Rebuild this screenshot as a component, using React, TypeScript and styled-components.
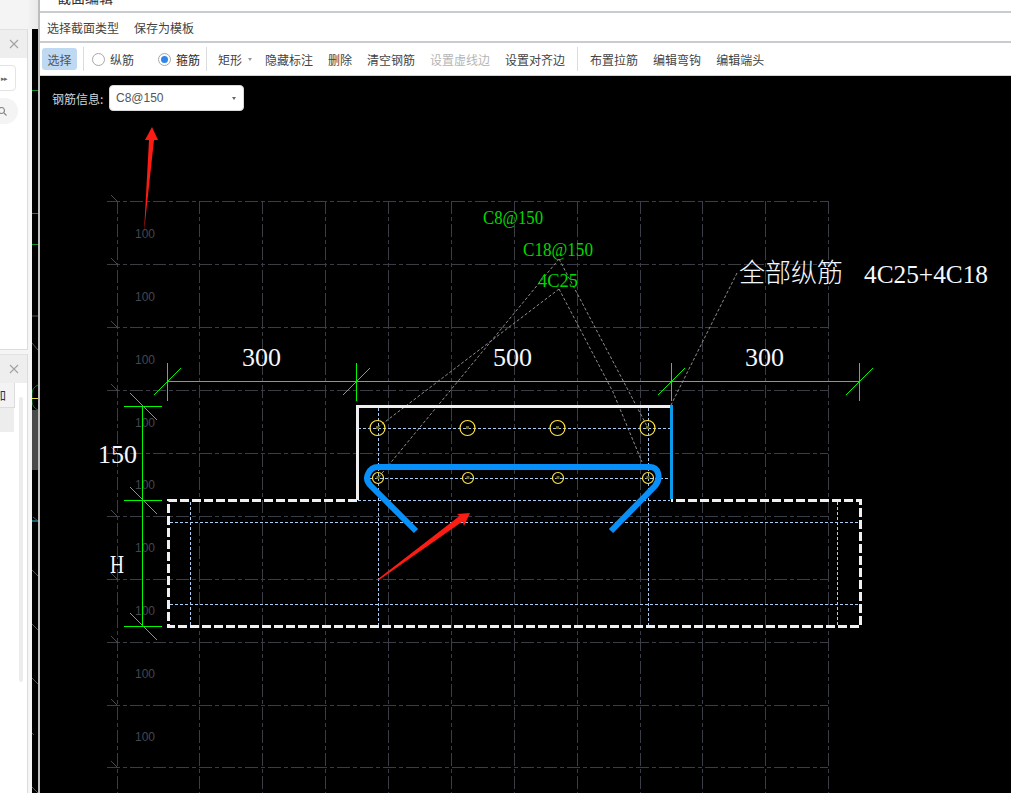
import React from "react";
import styled, { createGlobalStyle } from "styled-components";

const Global = createGlobalStyle`
  html, body { margin: 0; padding: 0; height: 100%; background: #f4f4f4; }
  #root { height: 100%; }
  * { box-sizing: border-box; }
`;

const UI_FONT = `"Noto Sans CJK SC", "Liberation Sans", sans-serif`;

const Page = styled.div`
  display: flex;
  width: 1011px;
  height: 793px;
  overflow: hidden;
  font-family: ${UI_FONT};
`;

const Sidebar = styled.aside`
  flex: none;
  width: 40px;
  height: 100%;
  display: flex;
  padding-top: 29px;
  border-right: 2px solid #bdbdbd;
  background: linear-gradient(90deg, #f4f4f4 0, #f4f4f4 70%, #e9e9e9 100%);
`;

const PanelStack = styled.div`
  flex: none;
  width: 32px;
  display: flex;
  flex-direction: column;
  gap: 4px;
  padding-right: 4px;
  background: #f5f5f5;
`;

const Panel = styled.section<{ $grow?: boolean }>`
  position: relative;
  flex: ${(p) => (p.$grow ? "1" : "none")};
  height: ${(p) => (p.$grow ? "auto" : "321px")};
  background: #fff;
  border-right: 1px solid #dcdcdc;
  border-bottom: ${(p) => (p.$grow ? "none" : "1px solid #dcdcdc")};
  overflow: hidden;
`;

const PanelHeader = styled.div`
  height: 29px;
  background: #eeeeee;
  border-top: 1px solid #e2e2e2;
  display: flex;
  align-items: center;
  padding-left: 9px;
  color: #a2a2a2;
`;

const StepButton = styled.div`
  width: 26px;
  height: 26px;
  margin: 7px 0 0 -10px;
  border: 1px solid #e4e4e4;
  border-radius: 4px;
  background: #fff;
  display: flex;
  align-items: center;
  justify-content: flex-end;
  padding-right: 8px;
  font-size: 7px;
  letter-spacing: -1px;
  color: #666;
`;

const SearchPill = styled.div`
  width: 38px;
  height: 26px;
  margin: 7px 0 0 -20px;
  border-radius: 13px;
  background: #f4f4f4;
  display: flex;
  align-items: center;
  justify-content: flex-end;
  padding-right: 11px;
  color: #8a8a8a;
`;

const ClippedTab = styled.div`
  width: 15px;
  height: 25px;
  background: #f3f3f3;
  border-right: 1px solid #dcdcdc;
  border-bottom: 1px solid #dcdcdc;
  overflow: hidden;
  font-size: 12px;
  line-height: 24px;
  color: #333;
  text-indent: -6px;
  white-space: nowrap;
`;

const GreyBlock = styled.div`
  width: 14px;
  height: 24px;
  background: #ededed;
`;

const ScrollTrack = styled.div`
  position: absolute;
  left: 19px;
  top: 43px;
  width: 4px;
  height: 285px;
  border-radius: 2px;
  background: #ececec;
`;

const Sliver = styled.svg`
  flex: none;
  width: 6px;
  height: 764px;
  display: block;
  background: #000;
`;

const Main = styled.main`
  flex: 1;
  min-width: 0;
  display: flex;
  flex-direction: column;
  background: #fff;
`;

const TitleBar = styled.div`
  flex: none;
  height: 13px;
  border-bottom: 2px solid #c8ccd0;
  overflow: hidden;
  padding-left: 17px;
  display: flex;
  align-items: flex-end;
  font-size: 14px;
  color: #333;
`;

const TitleText = styled.span`
  line-height: 20px;
  margin-bottom: 4px;
`;

const MenuBar = styled.div`
  flex: none;
  height: 30px;
  border-bottom: 2px solid #c8ccd0;
  padding-left: 7px;
  display: flex;
  align-items: center;
  gap: 15px;
  font-size: 12px;
  color: #444;
`;

const ToolBar = styled.div`
  flex: none;
  height: 33px;
  border-bottom: 1px solid #d4d4d4;
  padding-left: 2px;
  display: flex;
  align-items: center;
  font-size: 12px;
  color: #444;
  white-space: nowrap;
`;

const SelectButton = styled.div`
  width: 35px;
  height: 22px;
  border-radius: 3px;
  background: #bfd9f3;
  color: #555;
  display: flex;
  align-items: center;
  justify-content: center;
`;

const Divider = styled.span<{ $left: number; $right: number }>`
  flex: none;
  width: 1px;
  height: 24px;
  background: #dcdcdc;
  margin: 0 ${(p) => p.$right}px 0 ${(p) => p.$left}px;
`;

const RadioItem = styled.label<{ $width: number; $on?: boolean }>`
  flex: none;
  width: ${(p) => p.$width}px;
  display: flex;
  align-items: center;
  gap: 5px;
  color: ${(p) => (p.$on ? "#2a2a2a" : "#444")};
`;

const RadioMark = styled.span<{ $on?: boolean }>`
  flex: none;
  width: 13px;
  height: 13px;
  border-radius: 50%;
  border: 1px solid #a8a8a8;
  background: #fff;
  display: flex;
  align-items: center;
  justify-content: center;
  &::after {
    content: "";
    display: ${(p) => (p.$on ? "block" : "none")};
    width: 7px;
    height: 7px;
    border-radius: 50%;
    background: #2f86e8;
  }
`;

const ToolItem = styled.span<{ $disabled?: boolean; $gap?: number }>`
  flex: none;
  margin-right: ${(p) => p.$gap ?? 15}px;
  color: ${(p) => (p.$disabled ? "#b5b5b5" : "#444")};
`;

const Caret = styled.span`
  flex: none;
  width: 0;
  height: 0;
  margin: 1px 13px 0 -9px;
  border-left: 2.5px solid transparent;
  border-right: 2.5px solid transparent;
  border-top: 3px solid #999;
`;

const Canvas = styled.div`
  position: relative;
  flex: 1;
  min-height: 0;
  background: #000;
  overflow: hidden;
`;

const Drawing = styled.svg`
  display: block;
  width: 971px;
  height: 717px;
`;

const InfoField = styled.div`
  position: absolute;
  left: 12px;
  top: 9px;
  display: flex;
  align-items: center;
  gap: 5px;
  font-size: 12px;
  color: #cfd6dc;
`;

const FieldLabel = styled.span`
  width: 52px;
  white-space: nowrap;
`;

const FakeSelect = styled.div`
  width: 135px;
  height: 26px;
  border-radius: 4px;
  background: #fff;
  border: 1px solid #d9d9d9;
  padding: 0 7px 0 6px;
  display: flex;
  align-items: center;
  justify-content: space-between;
  font-family: "Liberation Sans", sans-serif;
  font-size: 12px;
  color: #555;
`;

const SelectCaret = styled.span`
  width: 0;
  height: 0;
  border-left: 2.5px solid transparent;
  border-right: 2.5px solid transparent;
  border-top: 3px solid #666;
`;

const GRID = "#3a3d46";
const GREEN = "#00f800";
const DASH = "#a9cdf5";
const BLUE = "#0890fa";

const gridX = [117, 199, 262, 325, 388, 451, 514, 577, 640, 702, 765, 828];
const gridY = [201, 264, 327, 390, 453, 516, 579, 642, 705, 767];
const labelY = [238, 301, 364, 427, 489, 552, 615, 678, 741];
const rebarX = [378, 468, 558, 648];

const leaders = [
  "737,273 671,405",
  "559,259 378,478",
  "559,289 377,428",
  "559,259 648,428",
  "559,289 613,392 642,462",
];

const dimTicksH = [167, 356, 671, 859];
const dimTicksV = [406, 500, 626];

const serif = `"Liberation Serif", "Noto Sans CJK SC", serif`;

const DimText: React.FC<{
  x: number;
  y: number;
  children: React.ReactNode;
  len?: number;
  size?: number;
  light?: boolean;
}> = ({ x, y, children, len, size = 26, light }) => (
  <text
    x={x}
    y={y}
    fontFamily={serif}
    fontSize={size}
    fontWeight={light ? 300 : 400}
    fill="#f4f8ff"
    {...(len ? { textLength: len, lengthAdjust: "spacingAndGlyphs" as const } : {})}
  >
    {children}
  </text>
);

const BarLabel: React.FC<{ x: number; y: number; len: number; children: React.ReactNode }> = ({
  x,
  y,
  len,
  children,
}) => (
  <text
    x={x}
    y={y}
    fontFamily={serif}
    fontSize={19}
    fill="#00d800"
    textLength={len}
    lengthAdjust="spacingAndGlyphs"
  >
    {children}
  </text>
);

const SectionDrawing: React.FC = () => (
  <Drawing viewBox="40 76 971 717">
    {/* axis grid */}
    <g stroke={GRID} strokeWidth={1} fill="none" strokeDasharray="13 3 4 3" shapeRendering="crispEdges">
      {gridX.map((x) => (
        <line key={x} x1={x + 0.5} y1={201} x2={x + 0.5} y2={793} />
      ))}
      {gridY.map((y) => (
        <line key={y} x1={107} y1={y + 0.5} x2={828} y2={y + 0.5} />
      ))}
    </g>
    <g stroke="#4a4a4f" strokeWidth={1}>
      {gridY.map((y) => (
        <line key={y} x1={111} y1={y - 6} x2={118} y2={y + 1} />
      ))}
    </g>
    <g fontFamily={`"Liberation Sans", sans-serif`} fontSize={12} fill="#43474f">
      {labelY.map((y) => (
        <text key={y} x={135} y={y}>
          100
        </text>
      ))}
    </g>

    {/* leader lines */}
    <g stroke="#8f8f8f" strokeWidth={1} strokeDasharray="3 2" fill="none">
      {leaders.map((p) => (
        <polyline key={p} points={p} />
      ))}
    </g>

    {/* rebar reference lines */}
    <g stroke={DASH} strokeWidth={1} strokeDasharray="3 2" fill="none" shapeRendering="crispEdges">
      <line x1={358} y1={428.5} x2={670} y2={428.5} />
      <line x1={370} y1={478.5} x2={670} y2={478.5} />
      <line x1={358} y1={500.5} x2={670} y2={500.5} />
      <line x1={170} y1={522.5} x2={858} y2={522.5} />
      <line x1={170} y1={604.5} x2={858} y2={604.5} />
      <line x1={190.5} y1={502} x2={190.5} y2={625} />
      <line x1={378.5} y1={408} x2={378.5} y2={625} />
      <line x1={648.5} y1={408} x2={648.5} y2={625} />
      <line x1={837.5} y1={502} x2={837.5} y2={625} />
    </g>

    {/* dimensions */}
    <g stroke={GREEN} strokeWidth={1} fill="none">
      <line x1={167} y1={381.5} x2={859} y2={381.5} />
      {dimTicksH.map((x) => (
        <g key={x}>
          <line x1={x + 0.5} y1={363} x2={x + 0.5} y2={401} />
          <line x1={x - 13} y1={395} x2={x + 14} y2={368} />
        </g>
      ))}
      <line x1={142.5} y1={406} x2={142.5} y2={626} />
      {dimTicksV.map((y) => (
        <g key={y}>
          <line x1={124} y1={y + 0.5} x2={162} y2={y + 0.5} />
          <line x1={130} y1={y - 13} x2={157} y2={y + 14} />
        </g>
      ))}
    </g>

    {/* concrete outline */}
    <polyline points="357.5,500 357.5,406.5 671,406.5" fill="none" stroke="#efefef" strokeWidth={3} />
    <line x1={671.5} y1={405} x2={671.5} y2={499} stroke="#0a9aea" strokeWidth={3} />
    <g fill="none" stroke="#f0f0f0" strokeWidth={3} strokeDasharray="9 3">
      <polyline points="357,500.5 168.5,500.5 168.5,626.5 860.5,626.5 860.5,500.5 671,500.5" />
    </g>

    {/* bars */}
    <g fill="none" stroke="#ffe23a" strokeWidth={1.2}>
      {rebarX.map((x) => (
        <React.Fragment key={x}>
          <circle cx={x - 0.5} cy={428} r={7.5} />
          <circle cx={x} cy={478} r={5.5} />
        </React.Fragment>
      ))}
    </g>
    <g fill="#6b6a2a">
      {rebarX.map((x) => (
        <React.Fragment key={x}>
          <rect x={x - 2} y={426} width={3} height={3} />
          <rect x={x - 1.5} y={476} width={3} height={3} />
        </React.Fragment>
      ))}
    </g>

    {/* stirrup */}
    <path
      d="M416 531 L371 486 Q365 480 368 474 Q371 467 378 467 L650 467 Q656 467 658 473 Q660 480 655 486 L611 531"
      fill="none"
      stroke={BLUE}
      strokeWidth={6}
    />

    {/* annotation arrows */}
    <polygon points="144,232 149,140 145,140 152,127 158,140 154,140" fill="#fb1c14" />
    <polygon points="378,579 459.5,516 457,514 470,513 464,526 462.5,521.5 379,580" fill="#fb1c14" />

    {/* texts */}
    <DimText x={242} y={366}>300</DimText>
    <DimText x={493} y={366}>500</DimText>
    <DimText x={745} y={366}>300</DimText>
    <DimText x={98} y={463}>150</DimText>
    <DimText x={110} y={573} len={14}>H</DimText>
    <DimText x={739} y={282} size={26} light>全部纵筋</DimText>
    <DimText x={864} y={283} len={124} size={25}>4C25+4C18</DimText>
    <BarLabel x={483} y={224} len={60}>C8@150</BarLabel>
    <BarLabel x={523} y={256} len={70}>C18@150</BarLabel>
    <BarLabel x={538} y={287} len={40}>4C25</BarLabel>
  </Drawing>
);

const CloseIcon: React.FC = () => (
  <svg width="10" height="10" viewBox="0 0 10 10" fill="none" stroke="currentColor" strokeWidth="1.1">
    <path d="M1 1l8 8M9 1l-8 8" />
  </svg>
);

const SearchIcon: React.FC = () => (
  <svg width="9" height="9" viewBox="0 0 9 9" fill="none" stroke="currentColor" strokeWidth="1.2">
    <circle cx="3.5" cy="3.5" r="3" />
    <path d="M6 6l2.5 2.5" />
  </svg>
);

const App: React.FC = () => (
  <Page>
    <Global />
    <Sidebar>
      <PanelStack>
        <Panel>
          <PanelHeader>
            <CloseIcon />
          </PanelHeader>
          <StepButton>▸▸</StepButton>
          <SearchPill>
            <SearchIcon />
          </SearchPill>
        </Panel>
        <Panel $grow>
          <PanelHeader>
            <CloseIcon />
          </PanelHeader>
          <ClippedTab>加</ClippedTab>
          <GreyBlock />
          <ScrollTrack />
        </Panel>
      </PanelStack>
      <Sliver viewBox="32 29 6 764">
        <g stroke="#0a8f2a" strokeWidth="1">
          <line x1="32" y1="90.5" x2="38" y2="90.5" />
          <line x1="32" y1="213.5" x2="38" y2="213.5" />
          <line x1="32" y1="244.5" x2="38" y2="244.5" />
        </g>
        <line x1="32" y1="316" x2="38" y2="316" stroke="#555" />
        <path d="M38 385a10 10 0 0 0-6 9v8a10 10 0 0 0 6 8" stroke="#0a7f2a" fill="none" />
        <line x1="32" y1="398.5" x2="38" y2="398.5" stroke="#e8e040" />
        <rect x="32" y="410" width="6" height="60" fill="#4a4a4a" />
        <line x1="32" y1="521" x2="38" y2="521" stroke="#1cc8d8" />
        <g stroke="#555">
          <line x1="32" y1="343" x2="38" y2="350" />
          <line x1="33" y1="517" x2="38" y2="521" />
          <line x1="32" y1="570" x2="38" y2="576" />
          <line x1="32" y1="624" x2="38" y2="630" />
          <line x1="32" y1="678" x2="38" y2="684" />
          <line x1="32" y1="733" x2="34" y2="735" />
          <line x1="32" y1="787" x2="38" y2="793" />
        </g>
      </Sliver>
    </Sidebar>
    <Main>
      <TitleBar>
        <TitleText>截面编辑</TitleText>
      </TitleBar>
      <MenuBar>
        <span>选择截面类型</span>
        <span>保存为模板</span>
      </MenuBar>
      <ToolBar>
        <SelectButton>选择</SelectButton>
        <Divider $left={6} $right={8} />
        <RadioItem $width={66}>
          <RadioMark />
          纵筋
        </RadioItem>
        <RadioItem $width={42} $on>
          <RadioMark $on />
          箍筋
        </RadioItem>
        <Divider $left={6} $right={11} />
        <ToolItem>矩形</ToolItem>
        <Caret />
        <ToolItem>隐藏标注</ToolItem>
        <ToolItem>删除</ToolItem>
        <ToolItem>清空钢筋</ToolItem>
        <ToolItem $disabled>设置虚线边</ToolItem>
        <ToolItem $gap={12}>设置对齐边</ToolItem>
        <Divider $left={0} $right={12} />
        <ToolItem>布置拉筋</ToolItem>
        <ToolItem>编辑弯钩</ToolItem>
        <ToolItem>编辑端头</ToolItem>
      </ToolBar>
      <Canvas>
        <SectionDrawing />
        <InfoField>
          <FieldLabel>钢筋信息:</FieldLabel>
          <FakeSelect>
            C8@150
            <SelectCaret />
          </FakeSelect>
        </InfoField>
      </Canvas>
    </Main>
  </Page>
);

export default App;
